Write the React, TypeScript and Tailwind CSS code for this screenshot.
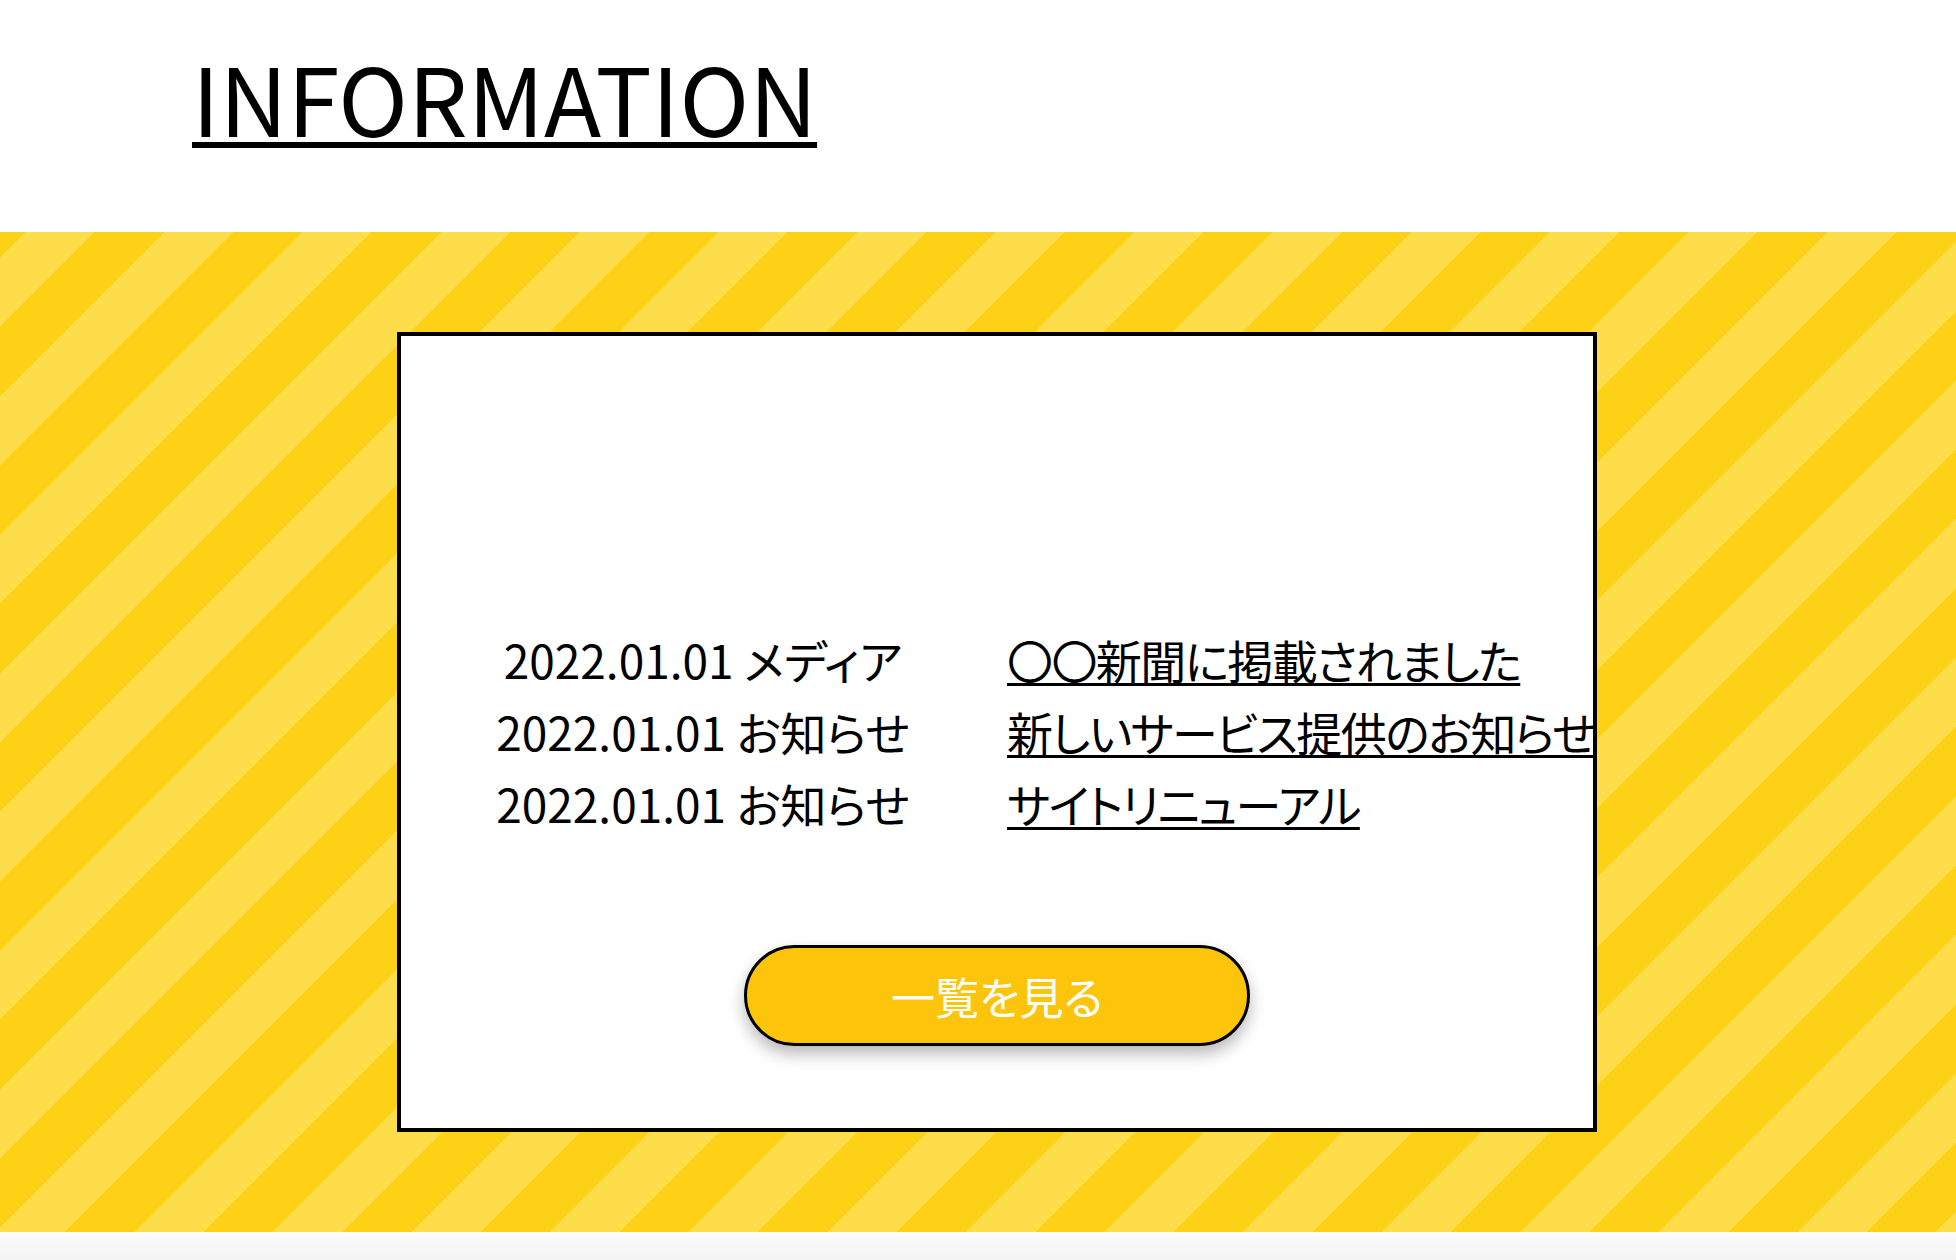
const news = [
  { date: "2022.01.01", category: "メディア", title: "〇〇新聞に掲載されました" },
  { date: "2022.01.01", category: "お知らせ", title: "新しいサービス提供のお知らせ" },
  { date: "2022.01.01", category: "お知らせ", title: "サイトリニューアル" },
];

const font = "font-['Noto_Sans_CJK_JP','Noto_Sans',sans-serif] [font-feature-settings:'palt']";

export default function App() {
  return (
    <div className={`min-h-[1260px] bg-white text-black ${font}`}>
      {/* heading */}
      <div className="h-[232px] pl-[192px] pt-[49px]">
        <h2 className="inline-block text-[94px] leading-[94px] underline decoration-[6px] underline-offset-[5px]">
          INFORMATION
        </h2>
      </div>

      {/* striped band */}
      <section className="h-[1000px] py-[100px] pl-[397px] bg-[repeating-linear-gradient(135deg,#fcd116_0_18px,#fddd4a_18px_67px,#fcd116_67px_98px)]">
        <div className="flex h-[800px] w-[1200px] flex-col border-4 border-black bg-white pt-[287px]">
          <dl className="grid grid-cols-[604px_1fr] text-[46px] leading-[72px]">
            {news.map((n) => (
              <div key={n.title} className="contents">
                <dt className="whitespace-nowrap text-center">
                  {n.date} {n.category}
                </dt>
                <dd className="whitespace-nowrap pl-[2px] tracking-[-1.6px]">
                  <a href="#" className="underline decoration-[3px] underline-offset-[4px]">
                    {n.title}
                  </a>
                </dd>
              </div>
            ))}
          </dl>
          <div className="mt-[106px] flex justify-center">
            <a
              href="#"
              className="flex h-[101px] w-[506px] items-center justify-center rounded-full border-[3px] border-black bg-[#fdc40c] text-[44px] text-white shadow-[0_8px_16px_rgba(0,0,0,0.28)]"
            >
              一覧を見る
            </a>
          </div>
        </div>
      </section>

      <div className="h-[28px] bg-gradient-to-b from-[#fcfcfc] to-[#f3f3f3]" />
    </div>
  );
}
